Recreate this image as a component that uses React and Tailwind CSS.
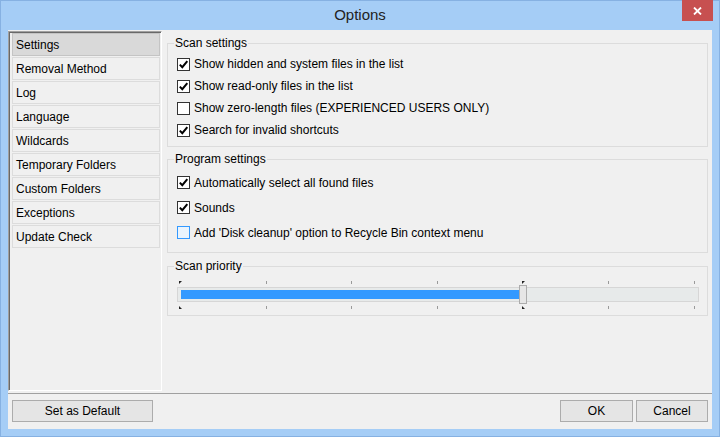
import { useState } from "react";

const font = { fontFamily: '"Liberation Sans", Arial, sans-serif' };

const pages = [
  "Settings",
  "Removal Method",
  "Log",
  "Language",
  "Wildcards",
  "Temporary Folders",
  "Custom Folders",
  "Exceptions",
  "Update Check",
];

const Check = ({ checked, hover }) => (
  <span
    className={`flex h-[13px] w-[13px] shrink-0 items-center justify-center border ${
      hover ? "border-[#3399ff] bg-[#eaf4fd]" : "border-[#333333] bg-white"
    }`}
  >
    {checked && (
      <svg width="11" height="11" viewBox="0 0 11 11">
        <path d="M1.8 5.6 L4.3 8.2 L9.3 2.2" fill="none" stroke="#000" strokeWidth="2" />
      </svg>
    )}
  </span>
);

const Row = ({ checked, hover, h, children }) => (
  <div className={`flex items-center gap-[4px] pl-[9px] ${h}`}>
    <Check checked={checked} hover={hover} />
    <span className="text-[12px] leading-none text-black">{children}</span>
  </div>
);

const Group = ({ title, className, children }) => (
  <fieldset className={`border border-[#dcdcdc] ${className}`}>
    <legend className="ml-[6px] px-px text-[12px] leading-[16px] text-black">{title}</legend>
    {children}
  </fieldset>
);

// tick marks above / below the slider track
const Ticks = ({ down }) => {
  const marks = [0, 1, 2, 3, 4, 5, 6];
  return (
    <div className="flex h-[3px] w-[522px] justify-between pl-[3px] pr-[4px]">
      {marks.map((m) =>
        m === 0 || m === 4 ? (
          <svg key={m} width="1" height="3" className="overflow-visible">
            <path d={down ? "M-1 0 L-1 3 L2 3 Z" : "M-1 0 L2 0 L-1 3 Z"} fill="#222" />
          </svg>
        ) : (
          <span key={m} className="h-[3px] w-px bg-[#9a9a9a]" />
        )
      )}
    </div>
  );
};

export default function App() {
  const [active, setActive] = useState(0);

  return (
    <div
      className="flex h-[437px] w-[720px] flex-col border border-[#86b1e2] bg-[#a5cdf6]"
      style={font}
    >
      {/* title bar */}
      <div className="relative flex h-[29px] shrink-0 items-center justify-center">
        <span className="text-[15px] text-[#222222]">Options</span>
        <div className="absolute right-[6px] top-[-1px] flex h-[21px] w-[31px] items-center justify-center bg-[#c75050]">
          <svg width="9" height="8" viewBox="0 0 9 8">
            <path d="M1 0.5 L8 7.5 M8 0.5 L1 7.5" stroke="#fff" strokeWidth="1.8" />
          </svg>
        </div>
      </div>

      {/* client area */}
      <div className="mx-[7px] flex h-[399px] flex-col bg-[#f0f0f0]">
        <div className="flex h-[363px]">
          {/* page list */}
          <div className="mt-px h-[360px] w-[154px] border-b border-l border-r border-t border-b-white border-l-[#a0a0a0] border-r-white border-t-[#a0a0a0]">
            <div className="flex h-full flex-col gap-px border-l border-t border-[#696969] pl-[2px] pr-[1px]">
              {pages.map((p, i) => (
                <div
                  key={p}
                  onClick={() => setActive(i)}
                  className={`flex h-[23px] items-center border pl-[3px] text-[12px] text-black ${
                    active === i
                      ? "border-[#c4c4c4] bg-[#d9d9d9]"
                      : "border-[#dcdcdc] bg-[#f0f0f0]"
                  }`}
                >
                  {p}
                </div>
              ))}
            </div>
          </div>

          {/* settings pane */}
          <div className="flex flex-1 flex-col pl-[5px] pr-[4px] pt-[5px]">
            <Group title="Scan settings" className="pb-[5px] pt-[2px]">
              <Row checked h="h-[22px]">Show hidden and system files in the list</Row>
              <Row checked h="h-[22px]">Show read-only files in the list</Row>
              <Row h="h-[22px]">Show zero-length files (EXPERIENCED USERS ONLY)</Row>
              <Row checked h="h-[22px]">Search for invalid shortcuts</Row>
            </Group>

            <Group title="Program settings" className="mt-[4px] pb-[7px] pt-[3px]">
              <Row checked h="h-[25px]">Automatically select all found files</Row>
              <Row checked h="h-[25px]">Sounds</Row>
              <Row hover h="h-[25px]">Add 'Disk cleanup' option to Recycle Bin context menu</Row>
            </Group>

            <Group title="Scan priority" className="mt-[5px] pb-[6px] pt-[7px]">
              <div className="pl-[9px]">
                <Ticks />
                <div className="relative mt-[3px] h-[15px] w-[522px] border border-[#d6d6d6] bg-[#e7eaea] pl-[3px] pt-[2px]">
                  <div className="h-[9px] w-[338px] bg-[#3399ff]" />
                  <div className="absolute left-[341px] top-[-3px] h-[19px] w-[8px] border border-[#acacac] bg-[#e6e6e6]" />
                </div>
                <div className="mt-[4px]">
                  <Ticks down />
                </div>
              </div>
            </Group>
          </div>
        </div>

        <div className="h-px bg-[#a0a0a0]" />

        {/* buttons */}
        <div className="flex items-start justify-between pl-[4px] pr-[4px] pt-[6px]">
          <button className="h-[22px] w-[141px] border border-[#acacac] bg-[#e5e5e5] text-[12px] text-black">
            Set as Default
          </button>
          <div className="flex gap-[3px]">
            <button className="h-[22px] w-[73px] border border-[#acacac] bg-[#e5e5e5] text-[12px] text-black">
              OK
            </button>
            <button className="h-[22px] w-[72px] border border-[#acacac] bg-[#e5e5e5] text-[12px] text-black">
              Cancel
            </button>
          </div>
        </div>
      </div>
    </div>
  );
}
